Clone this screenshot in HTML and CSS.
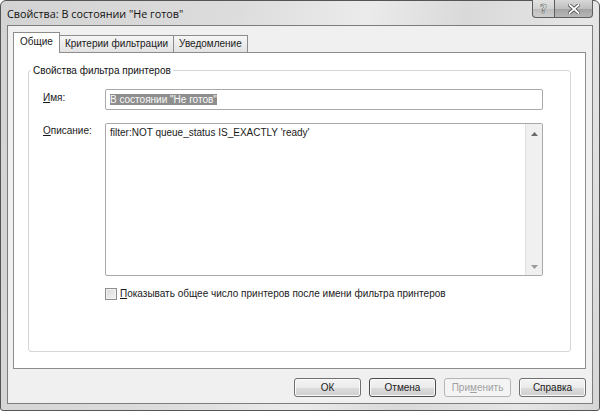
FILE: index.html
```html
<!DOCTYPE html>
<html lang="ru">
<head>
<meta charset="utf-8">
<title>Свойства</title>
<link rel="stylesheet" href="styles.css">
</head>
<body>
<div class="window">
  <div class="titlebar">
    <span class="title">Свойства: В состоянии "Не готов"</span>
    <div class="caption">
      <div class="cbtn help">?</div>
      <div class="cbtn close">
        <svg width="12" height="10" viewBox="0 0 12 10"><path d="M1.5 1 L10.5 9 M10.5 1 L1.5 9" stroke="#4a4a4a" stroke-width="3.4" stroke-linecap="square"/><path d="M1.5 1 L10.5 9 M10.5 1 L1.5 9" stroke="#ffffff" stroke-width="1.8" stroke-linecap="square"/></svg>
      </div>
    </div>
  </div>
  <div class="client">
    <div class="tabs">
      <div class="tab active">Общие</div>
      <div class="tab">Критерии фильтрации</div>
      <div class="tab">Уведомление</div>
    </div>
    <div class="panel">
      <fieldset class="group">
        <legend>Свойства фильтра принтеров</legend>
        <div class="form">
          <div class="lbl lbl-name"><u>И</u>мя:</div>
          <div class="input"><span class="sel">В состоянии "Не готов"</span></div>
          <div class="lbl lbl-desc"><u>О</u>писание:</div>
          <div class="textarea">
            <div class="ta-text">filter:NOT queue_status IS_EXACTLY 'ready'</div>
            <div class="scroll">
              <svg class="arr" width="7" height="4" viewBox="0 0 7 4"><path d="M0 4 L3.5 0 L7 4 Z" fill="#6a6a6a"/></svg>
              <svg class="arr" width="7" height="4" viewBox="0 0 7 4"><path d="M0 0 L3.5 4 L7 0 Z" fill="#9a9a9a"/></svg>
            </div>
          </div>
        </div>
        <div class="check-row">
          <span class="checkbox"></span>
          <span><u>П</u>оказывать общее число принтеров после имени фильтра принтеров</span>
        </div>
      </fieldset>
    </div>
    <div class="buttons">
      <div class="btn">ОК</div>
      <div class="btn default">Отмена</div>
      <div class="btn disabled">При<u>м</u>енить</div>
      <div class="btn">Справка</div>
    </div>
  </div>
</div>
</body>
</html>
```
FILE: styles.css
```css
* { box-sizing: border-box; }
html, body { margin: 0; background: #ffffff; }
body {
  font-family: "Liberation Sans", Arial, sans-serif;
  font-size: 10px;
  color: #1a1a1a;
}
.window {
  width: 600px;
  height: 411px;
  border: 1px solid #555555;
  border-radius: 6px 6px 3px 3px;
  background: linear-gradient(100deg, #d3d3d3 0%, #dcdcdc 35%, #ebebeb 55%, #d9d9d9 70%, #e6e6e6 88%, #d6d6d6 100%);
  padding: 0 6px 6px 6px;
  display: flex;
  flex-direction: column;
}
.titlebar {
  height: 24px;
  display: flex;
  justify-content: space-between;
  align-items: flex-start;
}
.title {
  font-family: "Open Sans", "Noto Sans", sans-serif;
  font-size: 10.8px;
  line-height: 16px;
  padding-top: 5px;
  color: #111;
}
.caption {
  display: flex;
  margin-top: -1px;
}
.cbtn {
  height: 18px;
  border: 1px solid #5e5e5e;
  border-top: none;
  display: flex;
  align-items: center;
  justify-content: center;
}
.help {
  width: 22px;
  border-right: none;
  border-radius: 0 0 0 4px;
  background: linear-gradient(#e2e2e2 0%, #d2d2d2 50%, #bdbdbd 51%, #cdcdcd 100%);
  color: #f4f4f4;
  font-family: "DejaVu Sans", sans-serif;
  font-size: 12px;
  font-weight: bold;
  -webkit-text-stroke: 0.6px #6a6a6a;
}
.close {
  width: 39px;
  border-radius: 0 0 4px 0;
  background: linear-gradient(#d8d8d8 0%, #bfbfbf 50%, #a2a2a2 51%, #b8b8b8 100%);
}
.client {
  flex: 1;
  border: 1px solid #7d7d7d;
  background: #f0f0f0;
  padding: 6px 6px 6px 5px;
  display: flex;
  flex-direction: column;
}
.tabs {
  display: flex;
  align-items: flex-end;
  height: 21px;
  margin-bottom: -1px;
}
.tab {
  height: 17px;
  margin-bottom: 1px;
  padding: 0 5px;
  line-height: 16px;
  border: 1px solid #8c8c8c;
  border-bottom: none;
  margin-right: -1px;
  background: linear-gradient(#f6f6f6, #e2e2e2);
  white-space: nowrap;
}
.tab.active {
  height: 21px;
  margin-bottom: 0;
  line-height: 18px;
  padding: 0 6px;
  background: #ffffff;
  position: relative;
  z-index: 1;
}
.panel {
  flex: 1;
  border: 1px solid #8c8c8c;
  background: #ffffff;
  padding: 11px 14px 16px 14px;
  display: flex;
  flex-direction: column;
}
.group {
  flex: 1;
  margin: 0;
  padding: 0;
  min-width: 0;
  border: 1px solid #d6d6d6;
  border-radius: 3px;
}
.group legend {
  margin-left: 2px;
  padding: 0 2px;
  line-height: 13px;
  color: #111;
}
.form {
  display: grid;
  grid-template-columns: 62px 1fr;
  grid-template-rows: 21px 153px;
  row-gap: 13px;
  margin: 12px 27px 0 14px;
}
.lbl { padding-top: 3px; }
.lbl-desc { padding-top: 2px; }
.input {
  border: 1px solid #a9a9a9;
  border-radius: 2px;
  padding: 3px 4px;
  line-height: 13px;
}
.sel {
  background: #8e8e8e;
  color: #fafafa;
}
.textarea {
  border: 1px solid #a9a9a9;
  border-radius: 2px;
  display: flex;
}
.ta-text {
  flex: 1;
  padding: 2px 4px;
  line-height: 13px;
}
.scroll {
  width: 17px;
  border-left: 1px solid #e0e0e0;
  background: #f0f0f0;
  display: flex;
  flex-direction: column;
  justify-content: space-between;
  align-items: center;
  padding: 8px 0 6px;
}
.check-row {
  display: flex;
  align-items: center;
  gap: 3px;
  margin: 12px 0 0 76px;
  line-height: 12px;
}
.checkbox {
  width: 12px;
  height: 12px;
  border: 1px solid #8e8e8e;
  background: linear-gradient(135deg, #d8d8d8, #f4f4f4);
  box-shadow: inset 0 0 0 1px #f2f2f2;
}
.buttons {
  display: flex;
  justify-content: flex-end;
  gap: 8px;
  margin-top: 9px;
}
.btn {
  width: 67px;
  height: 19px;
  border: 1px solid #707070;
  border-radius: 3px;
  background: linear-gradient(#f4f4f4 0%, #ebebeb 50%, #dcdcdc 51%, #cfcfcf 100%);
  box-shadow: inset 0 0 0 1px #fafafa;
  text-align: center;
  line-height: 17px;
  color: #222;
}
.btn.default {
  border-color: #4a4a4a;
}
.btn.disabled {
  border-color: #b5b5b5;
  background: #f4f4f4;
  color: #a0a0a0;
  box-shadow: none;
}
```
